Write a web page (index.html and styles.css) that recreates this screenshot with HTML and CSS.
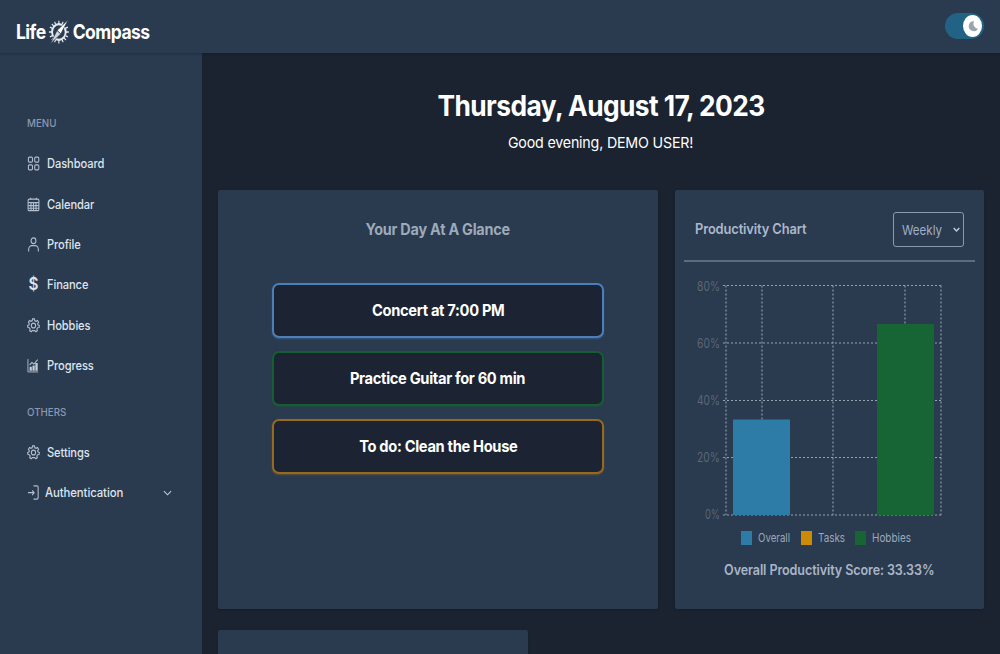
FILE: index.html
```html
<!DOCTYPE html>
<html lang="en">
<head>
<meta charset="utf-8">
<title>Life Compass</title>
<link rel="stylesheet" href="styles.css">
</head>
<body>
<header class="topbar">
  <div class="logo">
    <span>Life</span>
    <svg class="logo-icon" viewBox="0 0 24 24" width="26" height="26" fill="none" stroke="#e6ebf1">
      <circle cx="12" cy="12" r="7.2" stroke-width="2"/>
      <path stroke-width="1.2" d="M12 1.500V4.500M12 19.500V22.500M1.500 12H4.500M19.500 12H22.500M4.600 4.600L6.700 6.700M17.300 17.300L19.400 19.400M4.600 19.400L6.700 17.300M7.500 2.500L8.500 4.800M16.500 21.500L15.500 19.200M2.500 7.500L4.800 8.500M21.500 16.500L19.200 15.500M2.500 16.500L4.800 15.500M7.500 21.500L8.500 19.200M16.500 2.500L15.500 4.800M21.500 7.500L19.200 8.500"/>
      <path fill="#ffffff" stroke="#2a3a50" stroke-width=".7" d="M22 .5L14 13.800L10 10.600Z"/>
      <path fill="#cfd6df" stroke="#2a3a50" stroke-width=".7" d="M3 23L10 10.600L14 13.800Z"/>
    </svg>
    <span>Compass</span>
  </div>
  <div class="toggle"><span class="knob"><svg viewBox="0 0 14 14" width="14" height="14"><path fill="#9aa3ae" d="M8 2.200a5 5 0 1 0 4 7.600A5.200 5.200 0 0 1 8 2.200Z"/></svg></span></div>
</header>
<div class="layout">
  <aside class="sidebar">
    <h3 class="side-title"><span class="sq">MENU</span></h3>
    <ul class="side-list">
      <li class="side-item"><svg class="ic" viewBox="0 0 14 14" preserveAspectRatio="none"><rect x="1.500" y="1" width="4.400" height="4.800" rx="1.100"/><rect x="8.300" y="1" width="4.400" height="4.800" rx="1.100"/><rect x="1.500" y="8.200" width="4.400" height="4.800" rx="1.100"/><rect x="8.300" y="8.200" width="4.400" height="4.800" rx="1.100"/></svg><span class="sq">Dashboard</span></li>
      <li class="side-item"><svg class="ic" viewBox="0 0 14 14" preserveAspectRatio="none"><rect x="1.200" y="2" width="11.600" height="10.800" rx="1.200"/><path d="M1.200 5.200H12.800M1.200 8H12.800M1.200 10.500H12.800M4.300 5.200V12.800M7 5.200V12.800M9.700 5.200V12.800M4 .8V2.500M10 .8V2.500"/></svg><span class="sq">Calendar</span></li>
      <li class="side-item"><svg class="ic" viewBox="0 0 14 14" preserveAspectRatio="none"><circle cx="7" cy="3.500" r="2.600"/><path d="M1.800 13.500V11.500A3.500 3.500 0 0 1 5.300 8H8.700A3.500 3.500 0 0 1 12.200 11.500V13.500"/></svg><span class="sq">Profile</span></li>
      <li class="side-item"><span class="ic dollar">$</span><span class="sq">Finance</span></li>
      <li class="side-item"><svg class="ic" viewBox="0 0 14 14" preserveAspectRatio="none"><circle cx="7" cy="7" r="2.300"/><path d="M6 .9H8L8.400 2.500L9.900 3.100L11.300 2.300L12.500 3.900L11.500 5.200L11.800 6.300L13.300 7L13 8.900L11.400 9.100L10.600 10.300L11.100 11.800L9.500 12.800L8.300 11.700H5.700L4.500 12.800L2.900 11.800L3.400 10.300L2.600 9.100L1 8.900L.7 7L2.200 6.300L2.500 5.200L1.500 3.900L2.700 2.300L4.100 3.100L5.600 2.500Z"/></svg><span class="sq">Hobbies</span></li>
      <li class="side-item"><svg class="ic" viewBox="0 0 14 14" preserveAspectRatio="none"><path d="M1 1V13H12" stroke-width=".9"/><path d="M2.800 6.500L5.300 4.300L7.500 5.700L11.500 1.500" stroke-width="1.100"/><path class="fill" d="M2.800 12V8.200H5.200V12ZM5.900 12V6.900H8.300V12ZM9 12V4.600H11.500V12Z"/></svg><span class="sq">Progress</span></li>
    </ul>
    <h3 class="side-title others"><span class="sq">OTHERS</span></h3>
    <ul class="side-list second">
      <li class="side-item"><svg class="ic" viewBox="0 0 14 14" preserveAspectRatio="none"><circle cx="7" cy="7" r="2.300"/><path d="M6 .9H8L8.400 2.500L9.900 3.100L11.300 2.300L12.500 3.900L11.500 5.200L11.800 6.300L13.300 7L13 8.900L11.400 9.100L10.600 10.300L11.100 11.800L9.500 12.800L8.300 11.700H5.700L4.500 12.800L2.900 11.800L3.400 10.300L2.600 9.100L1 8.900L.7 7L2.200 6.300L2.500 5.200L1.500 3.900L2.700 2.300L4.100 3.100L5.600 2.500Z"/></svg><span class="sq">Settings</span></li>
      <li class="side-item"><svg class="ic ic-auth" viewBox="0 0 14 14" preserveAspectRatio="none"><path d="M7 .8H10.500Q12 .8 12 2.300V11.700Q12 13.200 10.500 13.200H7"/><path d="M1 7.200H7.500M5.500 5L7.700 7.200L5.500 9.400"/></svg><span class="sq auth-label">Authentication</span><svg class="chev" viewBox="0 0 10 6"><path d="M1 1L5 5L9 1"/></svg></li>
    </ul>
  </aside>
  <main class="main">
    <div class="greeting">
      <h1><span class="sq-c h1-t">Thursday, August 17, 2023</span></h1>
      <p><span class="sq-c p-t">Good evening, DEMO USER!</span></p>
    </div>
    <div class="grid">
      <section class="card glance">
        <h2><span class="sq-c g-t">Your Day At A Glance</span></h2>
        <div class="events">
          <div class="event blue"><span class="sq-c e-t">Concert at 7:00 PM</span></div>
          <div class="event green"><span class="sq-c e-t">Practice Guitar for 60 min</span></div>
          <div class="event amber"><span class="sq-c e-t">To do: Clean the House</span></div>
        </div>
      </section>
      <section class="card chart-card">
        <div class="chart-head">
          <h2><span class="sq">Productivity Chart</span></h2>
          <div class="select"><span class="sq">Weekly</span><svg viewBox="0 0 10 6" width="7" height="5"><path d="M1 1L5 5L9 1"/></svg></div>
        </div>
        <svg class="chart" viewBox="0 0 309 290" width="309" height="290">
          <g class="grid-lines">
            <path d="M51 23.500V253M87 23.500V253M158 23.500V253M230 23.500V253M266 23.500V253"/>
            <path d="M48 23.500H266M48 81H266M48 138.500H266M48 195.500H266M48 253H266"/>
          </g>
          <rect x="58" y="157.500" width="57" height="95.500" fill="#2d7ca8"/>
          <rect x="202" y="62" width="57" height="191" fill="#176535"/>
          <g class="ticks">
            <text x="22" y="29" textLength="23" lengthAdjust="spacingAndGlyphs">80%</text>
            <text x="22" y="86" textLength="23" lengthAdjust="spacingAndGlyphs">60%</text>
            <text x="22" y="143" textLength="23" lengthAdjust="spacingAndGlyphs">40%</text>
            <text x="22" y="200" textLength="23" lengthAdjust="spacingAndGlyphs">20%</text>
            <text x="30" y="257" textLength="15" lengthAdjust="spacingAndGlyphs">0%</text>
          </g>
          <g class="legend">
            <rect x="66" y="269" width="11" height="14" fill="#2d7ca8"/>
            <text x="83" y="280" textLength="32" lengthAdjust="spacingAndGlyphs">Overall</text>
            <rect x="126" y="269" width="11" height="14" fill="#cd8a04"/>
            <text x="143" y="280" textLength="27" lengthAdjust="spacingAndGlyphs">Tasks</text>
            <rect x="180" y="269" width="11" height="14" fill="#176535"/>
            <text x="197" y="280" textLength="39" lengthAdjust="spacingAndGlyphs">Hobbies</text>
          </g>
        </svg>
        <p class="score"><span class="sq-c s-t">Overall Productivity Score: 33.33%</span></p>
      </section>
      <section class="card extra"></section>
    </div>
  </main>
</div>
</body>
</html>
```
FILE: styles.css
```css
* { box-sizing: border-box; }
html, body { margin: 0; height: 100%; overflow: hidden; }
body { font-family: Inter, "Liberation Sans", sans-serif; background: #1b2330; color: #fff; }
h1, h2, h3, p, ul { margin: 0; padding: 0; }
ul { list-style: none; }

/* The reference text is horizontally condensed */
.sq { display: inline-block; transform: scaleX(.89); transform-origin: left center; white-space: nowrap; }
.sq-c { display: inline-block; transform-origin: center; white-space: nowrap; }
.h1-t { transform: scaleX(.94); }
.p-t { transform: scaleX(.95); }
.g-t { transform: scaleX(.93); }
.e-t { transform: scaleX(.917); }
.s-t { transform: scaleX(.897); }

.topbar { height: 53px; background: #2a3a4f; display: flex; align-items: center; justify-content: space-between; padding: 0 16px; box-shadow: 0 1px 3px rgba(0,0,0,.2); position: relative; }
.logo { display: flex; align-items: center; gap: 2.500px; font-size: 20px; font-weight: 700; letter-spacing: -.6px; color: #fff; margin-top: 10px; transform: scaleX(.875); transform-origin: left center; }
.logo-icon { display: block; }
.toggle { width: 39px; height: 26px; border-radius: 13px; background: #226385; display: flex; align-items: center; justify-content: flex-end; margin: -1px 0 0 0; padding-right: 2px; }
.knob { width: 19px; height: 22px; border-radius: 50%; background: #fff; display: flex; align-items: center; justify-content: center; }

.layout { display: flex; height: calc(100% - 53px); }
.sidebar { width: 202px; flex: none; background: #2a3a4f; padding: 64px 27px 0; color: #dee4ee; }
.side-title { font-size: 10.500px; font-weight: 500; color: #8a99af; line-height: 14px; }
.side-title .sq { transform: scaleX(.93); }
.others { margin-top: 20.500px; }
.side-list { margin-top: 12.500px; }
.second { margin-top: 12px; }
.side-item { display: flex; align-items: center; height: 40.400px; font-size: 12.500px; font-weight: 500; color: #dee4ee; letter-spacing: -.1px; }
.ic { width: 13px; height: 15px; margin-right: 6.500px; flex: none; fill: none; stroke: #b4bfce; stroke-width: 1.150; }
.ic .fill { fill: #c6cedb; stroke: none; }
.dollar { font-size: 17px; font-weight: 600; text-align: center; line-height: 15px; color: #dee4ee; transform: scaleX(.9); }
.ic-auth { margin-right: 5px; }
.auth-label { flex: 1; transform: scaleX(.91); }
.chev { width: 9px; height: 6px; fill: none; stroke: #c6cedb; stroke-width: 1.200; margin-right: 3px; }

.main { flex: 1; min-width: 0; padding: 36px 16px 0; }
.greeting { text-align: center; height: 101px; }
.greeting h1 { font-size: 28px; line-height: 34px; font-weight: 700; letter-spacing: -.6px; }
.greeting p { font-size: 15px; line-height: 20px; margin-top: 10px; letter-spacing: -.2px; }

.grid { display: grid; grid-template-columns: 440px 309px; column-gap: 17px; row-gap: 21px; align-items: start; }
.card { background: #2a3a4f; border-radius: 2px; box-shadow: 0 1px 3px rgba(0,0,0,.18); }
.glance { height: 419px; padding-top: 30px; }
.glance h2 { font-size: 15.500px; line-height: 20px; font-weight: 700; text-align: center; color: #9daab9; letter-spacing: -.25px; }
.events { margin: 43px 54px 0; display: flex; flex-direction: column; gap: 13px; }
.event { height: 55px; display: flex; align-items: center; justify-content: center; border-radius: 7px; background: #1c2433; font-size: 16px; font-weight: 700; letter-spacing: -.35px; border: 2px solid; padding-bottom: 2px; }
.blue { border-color: #4a7fbc; box-shadow: 0 1px 2px rgba(78,134,198,.4); }
.green { border-color: #155e32; box-shadow: 0 1px 2px rgba(23,101,53,.4); }
.amber { border-color: #96691c; box-shadow: 0 1px 2px rgba(169,116,26,.4); }

.chart-card { height: 419px; }
.chart-head { height: 72px; margin: 0 9px; padding: 22px 11px 0; display: flex; justify-content: space-between; align-items: flex-start; border-bottom: 2px solid #5c6b7e; }
.chart-head h2 { font-size: 14.500px; line-height: 34px; font-weight: 600; color: #aab8cb; letter-spacing: -.15px; white-space: nowrap; }
.select { width: 71px; height: 35px; border: 1px solid #8a99ab; border-radius: 3px; display: flex; align-items: center; justify-content: space-between; padding: 0 3px 0 8px; font-size: 13px; color: #9fb0c6; }
.select svg { fill: none; stroke: #c6cedb; stroke-width: 2; }
.chart { display: block; }
.grid-lines { fill: none; stroke: #97a1ad; stroke-width: 1.100; stroke-dasharray: 2 2; }
.ticks { font-size: 13px; fill: #5d6775; }
.legend { font-size: 12px; fill: #9ca9bb; }
.score { margin-top: 9px; font-size: 14px; line-height: 18px; font-weight: 600; text-align: center; color: #a8b5c6; letter-spacing: -.1px; }
.extra { height: 120px; width: 310px; }
```
